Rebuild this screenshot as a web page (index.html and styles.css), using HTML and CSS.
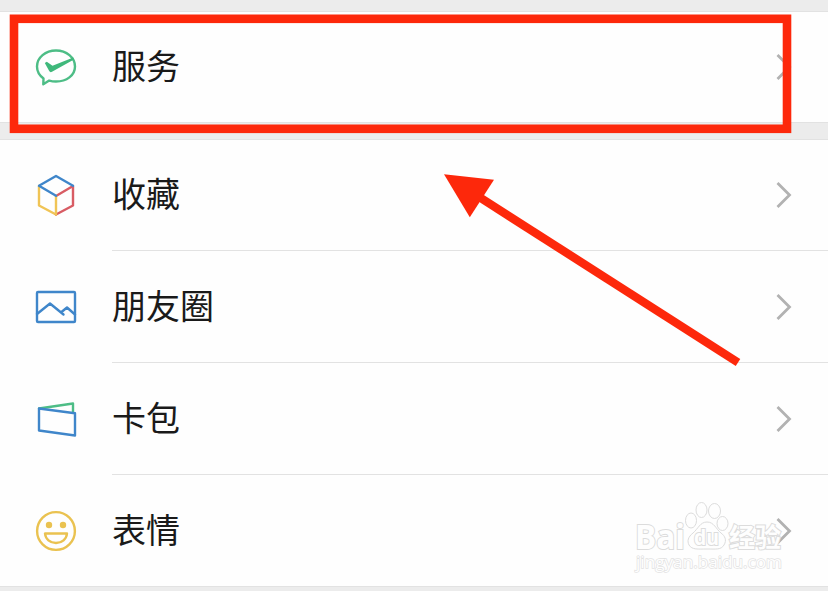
FILE: index.html
```html
<!DOCTYPE html>
<html lang="zh-CN">
<head>
<meta charset="UTF-8">
<meta name="viewport" content="width=device-width, initial-scale=1.0">
<title>我</title>
<link rel="stylesheet" href="styles.css">
</head>
<body>
    <div class="page">
        <div class="group">
            <div class="row">
                <svg class="icon" viewBox="0 0 48 48">
                    <path d="M11.500 35.500C7.500 32.500 5 28.500 5 23.500C5 14.500 13.500 7.500 24 7.500S43 14.500 43 23.500S34.500 38.500 24 38.500C21.500 38.500 19.300 38.200 17.200 37.600L11.300 41.300Z" stroke="#4dbd86"/>
                    <path class="solid" d="M12.800 20L14.800 18.800L20.500 22.800L41.300 14.500L42 16.500L20 28.800Q18.200 29.800 17.200 28Z" fill="#3fb87b"/>
                </svg>
                <span class="label">服务</span>
                <svg class="chevron" viewBox="0 0 16 28"><path d="M1.500 2L13.500 14L1.500 26"/></svg>
            </div>
        </div>

        <div class="group">
            <div class="row">
                <svg class="icon" viewBox="0 0 48 48">
                    <path d="M7 15V34.500L24 43.500" stroke="#f0c455"/>
                    <path d="M24 43.500L41 34.500V15L24 25" stroke="#d85c64"/>
                    <path d="M24 43.500V25" stroke="#f0c455"/>
                    <path d="M24 24.800L7 14.800L24 5L41 14.800" stroke="#3f86ca"/>
                </svg>
                <span class="label">收藏</span>
                <svg class="chevron" viewBox="0 0 16 28"><path d="M1.500 2L13.500 14L1.500 26"/></svg>
            </div>
            <div class="row">
                <svg class="icon" viewBox="0 0 48 48" stroke="#3f86ca">
                    <rect x="5" y="9" width="38" height="30" rx="1"/>
                    <path d="M5 31L18 20.500L31.500 31.500M29.500 29L35 24.500L43 31.500"/>
                </svg>
                <span class="label">朋友圈</span>
                <svg class="chevron" viewBox="0 0 16 28"><path d="M1.500 2L13.500 14L1.500 26"/></svg>
            </div>
            <div class="row">
                <svg class="icon" viewBox="0 0 48 48">
                    <path d="M7 13.500L41 8.500V17" stroke="#4dbd86"/>
                    <path d="M7 13.500L43 18.300V40.500L7 35.500Z" stroke="#3f86ca"/>
                </svg>
                <span class="label">卡包</span>
                <svg class="chevron" viewBox="0 0 16 28"><path d="M1.500 2L13.500 14L1.500 26"/></svg>
            </div>
            <div class="row">
                <svg class="icon" viewBox="0 0 48 48" stroke="#eac250">
                    <circle cx="24" cy="24" r="18.900"/>
                    <circle class="solid" cx="17" cy="18" r="3.200" fill="#eac250"/>
                    <circle class="solid" cx="31" cy="18" r="3.200" fill="#eac250"/>
                    <path d="M13 26.500H35C34.500 32 30 36 24 36S13.500 32 13 26.500Z"/>
                </svg>
                <span class="label">表情</span>
                <svg class="chevron" viewBox="0 0 16 28"><path d="M1.500 2L13.500 14L1.500 26"/></svg>
            </div>
        </div>

        <!-- watermark, red box and arrow over the list -->
        <svg class="overlay" viewBox="0 0 828 591">
            <g class="watermark">
                <ellipse cx="691" cy="520.500" rx="5.500" ry="7.500"/>
                <ellipse cx="701.500" cy="510" rx="5.500" ry="7.500"/>
                <ellipse cx="714.500" cy="511" rx="6" ry="7.500"/>
                <ellipse cx="722.500" cy="523.500" rx="5.500" ry="7"/>
                <path d="M707 522C700 522 698 529 693 533C688 537 687 541 689 545C692 550 698 549 707 549S721 550 724 545C727 540 725 536 721 533C716 529 714 522 707 522Z"/>
                <text class="logo" x="635" y="549" textLength="50" lengthAdjust="spacingAndGlyphs">Bai</text>
                <text class="du" x="694" y="545" textLength="25" lengthAdjust="spacingAndGlyphs">du</text>
                <text class="jingyan" x="729" y="547" textLength="52" lengthAdjust="spacingAndGlyphs">经验</text>
                <text class="url" x="636" y="568" textLength="146" lengthAdjust="spacingAndGlyphs">jingyan.baidu.com</text>
            </g>
            <rect class="box" x="14" y="18.800" width="773" height="110"/>
            <path class="shaft" d="M480 197.500L738 362.500"/>
            <path class="head" d="M444 174.300L494 179.800L469.800 217.300Z"/>
        </svg>
    </div>
</body>
</html>
```

FILE: styles.css
```css
* {
    box-sizing: border-box;
}
body {
    margin: 0;
    background-color: #ececec;
    font-family: "Noto Sans CJK SC", sans-serif;
}
.page {
    position: relative;
    height: 591px;
    padding-top: 11px;
    overflow: hidden;
}
.group {
    margin-bottom: 16px;
    background-color: #fefefe;
    border-top: 1px solid #e2e2e2;
    border-bottom: 1px solid #e2e2e2;
}
.row {
    display: flex;
    align-items: center;
    height: 112px;
    padding: 0 36px 0 32px;
    background: linear-gradient(#e2e2e2, #e2e2e2) 112px 100% / 100% 1px no-repeat;
}
.row:first-child {
    height: 111px;
    padding-bottom: 1px;
}
.row:last-child {
    height: 111px;
    background: none;
}
.row:only-child {
    height: 110px;
    padding-bottom: 0;
}
.icon {
    width: 48px;
    height: 48px;
    fill: none;
    stroke-width: 2.4;
    stroke-linejoin: round;
    stroke-linecap: round;
}
.icon .solid {
    stroke: none;
}
.label {
    flex: 1;
    margin-left: 32px;
    padding-bottom: 4px;
    font-size: 34px;
    line-height: 48px;
    color: #1a1a1a;
}
.chevron {
    width: 16px;
    height: 28px;
    fill: none;
    stroke: #b2b2b2;
    stroke-width: 2.8;
}
.overlay {
    position: absolute;
    top: 0;
    left: 0;
    width: 828px;
    height: 591px;
}
.box {
    fill: none;
    stroke: #fd280b;
    stroke-width: 8.6;
}
.shaft {
    stroke: #fd280b;
    stroke-width: 8.4;
}
.head {
    fill: #fd280b;
}
.watermark {
    fill: #fefefe;
    stroke: #dcdcdc;
    stroke-width: 1;
}
.watermark text {
    font-family: "Open Sans", "Noto Sans CJK SC", sans-serif;
    font-weight: bold;
    paint-order: stroke;
    stroke-width: 2;
}
.watermark .logo {
    font-size: 34px;
}
.watermark .du {
    font-size: 21px;
}
.watermark .jingyan {
    font-size: 26px;
}
.watermark .url {
    font-size: 17px;
    font-weight: normal;
    stroke: #e2e2e2;
    stroke-width: 1.4;
}
```
